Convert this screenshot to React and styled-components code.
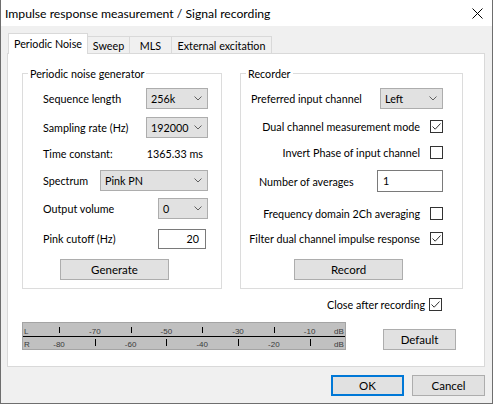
import React from "react";
import styled, { createGlobalStyle } from "styled-components";

const Global = createGlobalStyle`
  html, body { margin: 0; padding: 0; background: #ffffff; }
  * { box-sizing: border-box; }
`;

const FONT = `Lato, "Liberation Sans", sans-serif`;

const Window = styled.div`
  width: 493px;
  height: 404px;
  background: #f0f0f0;
  border: 1px solid #6e6e6e;
  border-top: none;
  display: flex;
  flex-direction: column;
  font-family: ${FONT};
  font-size: 10.75px;
  color: #000;
`;

const TitleBar = styled.div`
  height: 26px;
  background: #ffffff;
  display: flex;
  align-items: center;
  justify-content: space-between;
  padding: 0 9px 0 4px;
`;

const Title = styled.span`
  font-size: 12.2px;
  white-space: nowrap;
`;

const Body = styled.div`
  padding: 7px 7px 0 6px;
  display: flex;
  flex-direction: column;
`;

const TabStrip = styled.div`
  height: 20px;
  display: flex;
  align-items: flex-end;
  padding-left: 1px;
`;

const Tab = styled.div`
  position: relative;
  z-index: ${(p) => (p.$active ? 1 : 0)};
  width: ${(p) => p.$w}px;
  height: ${(p) => (p.$active ? 21 : 17)}px;
  margin-bottom: ${(p) => (p.$active ? -1 : 0)}px;
  background: ${(p) => (p.$active ? "#ffffff" : "#f0f0f0")};
  border: 1px solid #d9d9d9;
  border-bottom: none;
  border-left: ${(p) => (p.$active ? "1px solid #d9d9d9" : "none")};
  display: flex;
  align-items: center;
  justify-content: center;
  padding-bottom: ${(p) => (p.$active ? 2 : 0)}px;
  white-space: nowrap;
`;

const Panel = styled.div`
  height: 314px;
  background: #ffffff;
  border: 1px solid #d9d9d9;
  padding: 19px 0 0 14px;
  display: flex;
  flex-direction: column;
`;

const Groups = styled.div`
  display: flex;
  gap: 18px;
`;

const GroupBox = styled.div`
  position: relative;
  width: ${(p) => p.$w}px;
  height: 216px;
  border: 1px solid #dcdcdc;
  padding: 0 ${(p) => p.$pr}px 0 ${(p) => p.$pl}px;
  display: flex;
  flex-direction: column;
`;

const Legend = styled.span`
  position: absolute;
  top: -8px;
  left: 5px;
  padding: 0 2px;
  background: #ffffff;
  line-height: 15px;
  white-space: nowrap;
`;

const Row = styled.div`
  display: flex;
  align-items: center;
  height: ${(p) => p.$h || 21}px;
  margin-top: ${(p) => p.$mt}px;
  justify-content: ${(p) => p.$justify || "space-between"};
  gap: ${(p) => p.$gap || 0}px;
  padding-left: ${(p) => p.$pl || 0}px;
  white-space: nowrap;
`;

const Combo = styled.div`
  width: ${(p) => p.$w}px;
  height: 21px;
  background: #e1e1e1;
  border: 1px solid #adadad;
  display: flex;
  align-items: center;
  justify-content: space-between;
  padding: 0 5px 0 4px;
`;

const TextBox = styled.div`
  width: ${(p) => p.$w}px;
  height: ${(p) => p.$h}px;
  margin-right: ${(p) => p.$mr || 0}px;
  background: #ffffff;
  border: 1px solid #7a7a7a;
  display: flex;
  align-items: ${(p) => (p.$align === "right" ? "center" : "flex-start")};
  justify-content: ${(p) => (p.$align === "right" ? "flex-end" : "flex-start")};
  padding: ${(p) => (p.$align === "right" ? "0 6px 0 0" : "3px 0 0 5px")};
`;

const Value = styled.span`
  margin-right: ${(p) => p.$mr}px;
`;

const Button = styled.div`
  width: ${(p) => p.$w || 108}px;
  height: 21px;
  margin-left: ${(p) => p.$ml || 0}px;
  margin-top: ${(p) => p.$mt || 0}px;
  background: #e1e1e1;
  border: ${(p) => (p.$default ? "2px solid #0078d7" : "1px solid #adadad")};
  display: flex;
  align-items: center;
  justify-content: center;
  font-size: 11.5px;
`;

const Box = styled.div`
  width: 13px;
  height: 13px;
  flex: none;
  background: #ffffff;
  border: 1px solid #333333;
  display: flex;
  align-items: center;
  justify-content: center;
`;

const CloseRow = styled.div`
  display: flex;
  align-items: center;
  justify-content: flex-end;
  gap: 4px;
  height: 13px;
  margin-top: 9px;
  padding-right: 42px;
  white-space: nowrap;
`;

const MeterRow = styled.div`
  display: flex;
  align-items: flex-start;
  margin-top: 11px;
`;

const Footer = styled.div`
  display: flex;
  justify-content: flex-end;
  gap: 8px;
  margin-top: 8px;
`;

const Chevron = () => (
  <svg width="8" height="5" viewBox="0 0 8 5">
    <path d="M0.5 0.5 L4 4 L7.5 0.5" fill="none" stroke="#606060" strokeWidth="1" />
  </svg>
);

const Check = ({ checked }) => (
  <Box>
    {checked && (
      <svg width="11" height="11" viewBox="0 0 11 11">
        <path d="M1.5 5.5 L4.2 8.2 L9.5 2.5" fill="none" stroke="#333" strokeWidth="1" />
      </svg>
    )}
  </Box>
);

const ComboBox = ({ w, value }) => (
  <Combo $w={w}>
    <span>{value}</span>
    <Chevron />
  </Combo>
);

const dbX = (v) => 37 + (v + 80) * 3.58;

const Meter = () => {
  const lLabels = [-70, -50, -30, -10];
  const rLabels = [-80, -60, -40, -20];
  return (
    <svg width="324" height="28" viewBox="0 0 324 28" style={{ display: "block" }}>
      <rect x="0.5" y="0.5" width="323" height="27" fill="#c0c0c0" stroke="#a4a4a4" />
      <line x1="1" y1="14.5" x2="323" y2="14.5" stroke="#000" strokeWidth="1" />
      <g fontFamily="'Liberation Sans', Arial, sans-serif" fontSize="8" fill="#3a3a3a">
        <text x="2" y="11.5">L</text>
        <text x="2" y="24.5">R</text>
        {lLabels.map((v) => (
          <text key={"l" + v} x={dbX(v)} y="11.5" textAnchor="middle">{v}</text>
        ))}
        {rLabels.map((v) => (
          <text key={"r" + v} x={dbX(v)} y="24.5" textAnchor="middle">{v}</text>
        ))}
        <text x="317" y="11.5" textAnchor="middle">dB</text>
        <text x="317" y="24.5" textAnchor="middle">dB</text>
      </g>
      <g stroke="#000" strokeWidth="1">
        {rLabels.map((v) => (
          <line key={"lt" + v} x1={Math.round(dbX(v)) + 0.5} y1="5" x2={Math.round(dbX(v)) + 0.5} y2="11" />
        ))}
        {lLabels.map((v) => (
          <line key={"rt" + v} x1={Math.round(dbX(v)) + 0.5} y1="17" x2={Math.round(dbX(v)) + 0.5} y2="24" />
        ))}
      </g>
    </svg>
  );
};

export default function App() {
  return (
    <Window>
      <Global />
      <TitleBar>
        <Title>Impulse response measurement / Signal recording</Title>
        <svg width="11" height="11" viewBox="0 0 11 11">
          <path d="M0.5 0.5 L10.5 10.5 M10.5 0.5 L0.5 10.5" stroke="#000" strokeWidth="1" />
        </svg>
      </TitleBar>
      <Body>
        <TabStrip>
          <Tab $active $w={80}>Periodic Noise</Tab>
          <Tab $w={42}>Sweep</Tab>
          <Tab $w={42}>MLS</Tab>
          <Tab $w={100}>External excitation</Tab>
        </TabStrip>
        <Panel>
          <Groups>
            <GroupBox $w={200} $pl={20} $pr={13}>
              <Legend>Periodic noise generator</Legend>
              <Row $mt={14}>
                <span>Sequence length</span>
                <ComboBox w={62} value="256k" />
              </Row>
              <Row $mt={8}>
                <span>Sampling rate (Hz)</span>
                <ComboBox w={62} value="192000" />
              </Row>
              <Row $mt={5}>
                <span>Time constant:</span>
                <Value $mr={5}>1365.33 ms</Value>
              </Row>
              <Row $mt={6}>
                <span>Spectrum</span>
                <ComboBox w={108} value="Pink PN" />
              </Row>
              <Row $mt={7}>
                <span>Output volume</span>
                <ComboBox w={50} value="0" />
              </Row>
              <Row $mt={9}>
                <span>Pink cutoff (Hz)</span>
                <TextBox $w={48} $h={20} $mr={2} $align="right">20</TextBox>
              </Row>
              <Row $mt={10} $justify="flex-start">
                <Button $ml={17} $w={109}>Generate</Button>
              </Row>
            </GroupBox>
            <GroupBox $w={223} $pl={10} $pr={19}>
              <Legend>Recorder</Legend>
              <Row $mt={14}>
                <span>Preferred input channel</span>
                <ComboBox w={63} value="Left" />
              </Row>
              <Row $mt={7} $justify="flex-end" $gap={10}>
                <span>Dual channel measurement mode</span>
                <Check checked />
              </Row>
              <Row $mt={5} $justify="flex-end" $gap={10}>
                <span>Invert Phase of input channel</span>
                <Check />
              </Row>
              <Row $mt={7} $h={22} $pl={8}>
                <span>Number of averages</span>
                <TextBox $w={66} $h={22}>1</TextBox>
              </Row>
              <Row $mt={11} $justify="flex-end" $gap={10}>
                <span>Frequency domain 2Ch averaging</span>
                <Check />
              </Row>
              <Row $mt={4} $justify="flex-end" $gap={10}>
                <span>Filter dual channel impulse response</span>
                <Check checked />
              </Row>
              <Row $mt={10} $justify="flex-start">
                <Button $ml={43} $w={109}>Record</Button>
              </Row>
            </GroupBox>
          </Groups>
          <CloseRow>
            <span>Close after recording</span>
            <Check checked />
          </CloseRow>
          <MeterRow>
            <Meter />
            <Button $ml={37} $mt={7} $w={73}>Default</Button>
          </MeterRow>
        </Panel>
        <Footer>
          <Button $default $w={73}>OK</Button>
          <Button $w={73}>Cancel</Button>
        </Footer>
      </Body>
    </Window>
  );
}
